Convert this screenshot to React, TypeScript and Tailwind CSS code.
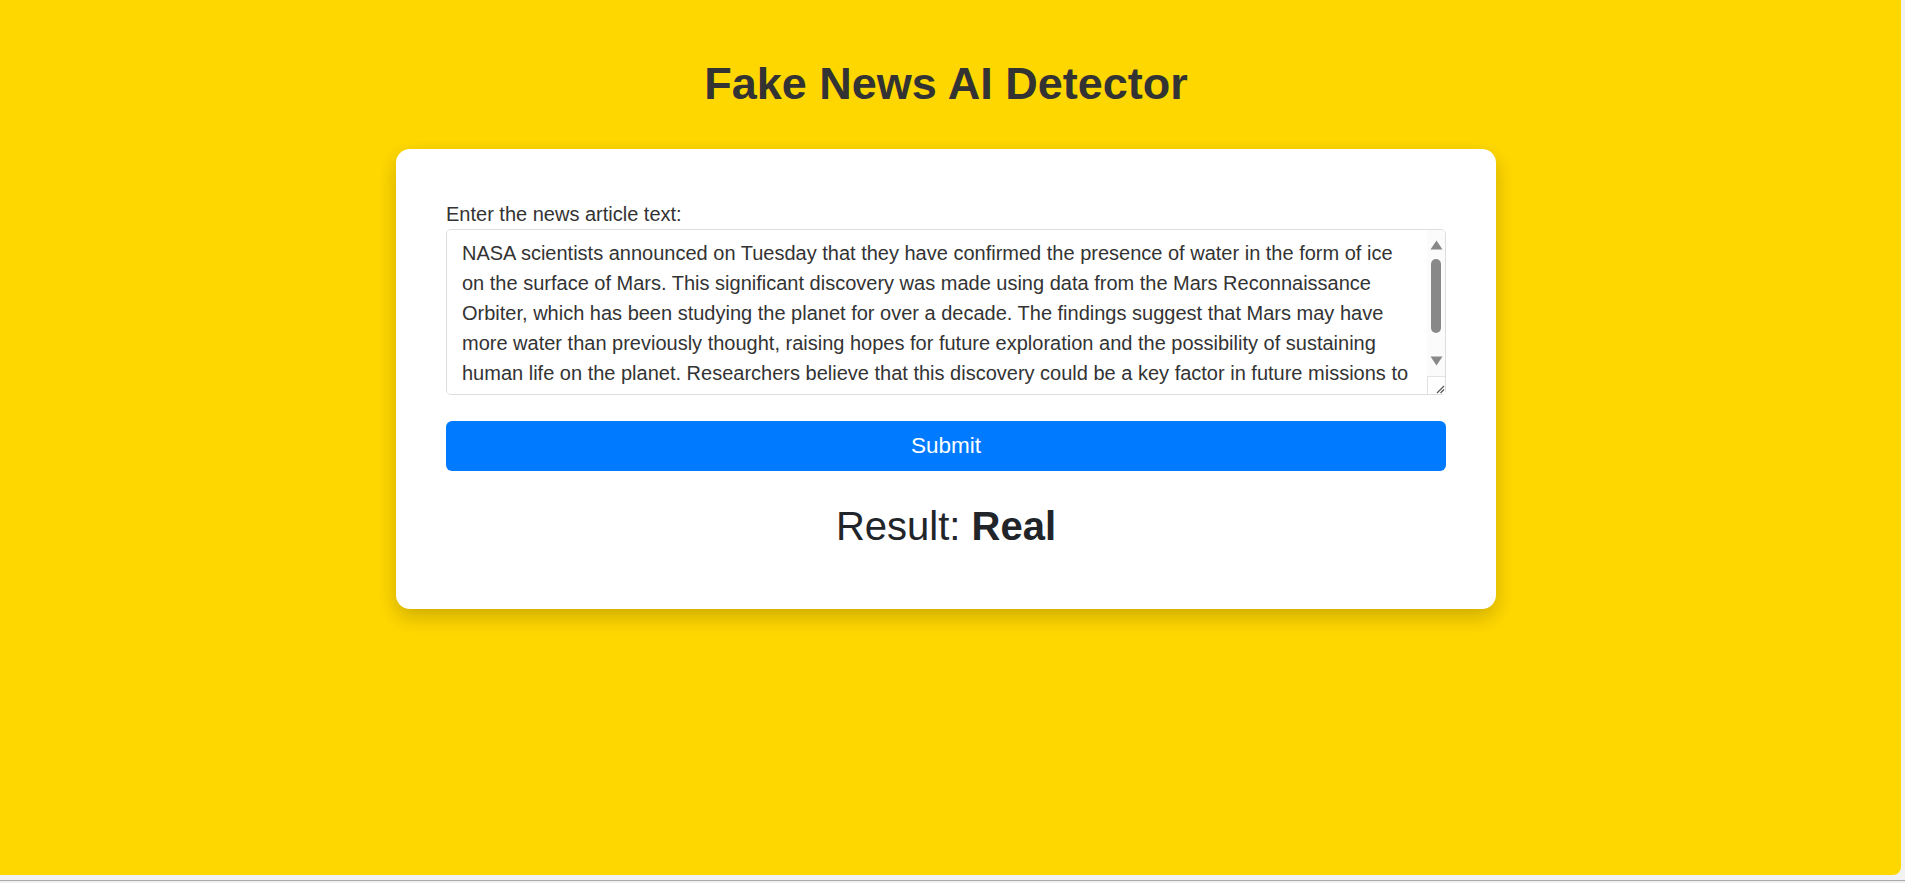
import React, { useEffect, useRef } from "react";

const ARTICLE =
  "NASA scientists announced on Tuesday that they have confirmed the presence of water in the form of ice on the surface of Mars. This significant discovery was made using data from the Mars Reconnaissance Orbiter, which has been studying the planet for over a decade. The findings suggest that Mars may have more water than previously thought, raising hopes for future exploration and the possibility of sustaining human life on the planet. Researchers believe that this discovery could be a key factor in future missions to Mars, as water is a crucial resource for drinking, growing food and producing rocket fuel.";

export default function App() {
  const ref = useRef<HTMLTextAreaElement>(null);
  useEffect(() => {
    if (ref.current) ref.current.scrollTop = 7;
  }, []);

  return (
    <div className="h-[883px] w-full overflow-hidden bg-[#f2f2f2] font-['Liberation_Sans',Arial,sans-serif]">
      <div className="h-[875px] w-[1901px] rounded-br-[8px] bg-[#FFD700]">
        <div className="flex w-[1892px] flex-col items-center pt-[58px]">
          <h1 className="text-[45px] font-bold leading-[52px] text-[#333333]">
            Fake News AI Detector
          </h1>
          <div className="mt-[39px] w-[1100px] rounded-[14px] bg-white px-[50px] pt-[50px] pb-[59px] shadow-[0_8px_20px_rgba(0,0,0,0.2)]">
            <label className="block text-[20px] leading-[30px] text-[#333333]">
              Enter the news article text:
            </label>
            <div className="relative h-[166px] w-full">
              <textarea
                ref={ref}
                readOnly
                value={ARTICLE}
                className="block h-[166px] w-full resize-none overflow-y-scroll rounded-[5px] border border-[#dddddd] bg-white py-[15px] pr-[33px] pl-[15px] text-[20px] leading-[30px] text-[#333333] outline-none [scrollbar-width:none] [&::-webkit-scrollbar]:hidden"
              />
              <div className="absolute top-[1px] right-[1px] bottom-[1px] flex w-[18px] flex-col items-center rounded-tr-[5px] bg-[#fbfbfb]">
                <svg width="13" height="10" viewBox="0 0 13 10" className="mt-[10px]">
                  <path d="M6.5 0.5 L12.5 9.5 L0.5 9.5 Z" fill="#888888" />
                </svg>
                <div className="mt-[9px] h-[74px] w-[10px] rounded-full bg-[#888888]" />
                <svg width="13" height="10" viewBox="0 0 13 10" className="mt-[23px]">
                  <path d="M0.5 0.5 L12.5 0.5 L6.5 9.5 Z" fill="#888888" />
                </svg>
                <div className="mt-auto flex h-[18px] w-[18px] items-end justify-end border-t border-l border-[#e2e2e2] bg-white">
                  <svg width="9" height="9" viewBox="0 0 9 9">
                    <path d="M1 8 L8 1 M4.5 8 L8 4.5" stroke="#555555" strokeWidth="1.2" />
                  </svg>
                </div>
              </div>
            </div>
            <button
              type="button"
              className="mt-[26px] block h-[50px] w-full rounded-[6px] bg-[#007bff] text-[22.5px] text-white"
            >
              Submit
            </button>
            <div className="mt-[31px] text-center text-[40px] leading-[48px] text-[#212529]">
              Result: <span className="font-bold">Real</span>
            </div>
          </div>
        </div>
      </div>
      <div className="mt-[5px] h-px w-full bg-[#aaaaaa]" />
    </div>
  );
}
